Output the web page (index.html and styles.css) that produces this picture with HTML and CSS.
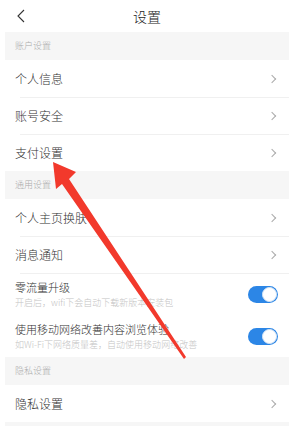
FILE: index.html
```html
<!DOCTYPE html>
<html lang="zh-CN">
<head>
  <meta charset="UTF-8" />
  <title>设置</title>
  <meta name="viewport" content="width=device-width, initial-scale=1.0" />
  <link rel="stylesheet" href="styles.css">
</head>
<body>
  <div class="page">
    <div class="header">
      <svg class="back" width="10" height="14" viewBox="0 0 10 14"><path d="M8 1 L2 7 L8 13" fill="none" stroke="#333" stroke-width="1.1"/></svg>
      <div class="title">设置</div>
    </div>

    <div class="group-label">账户设置</div>
    <div class="row"><span>个人信息</span><i class="chev"></i></div>
    <div class="row line"><span>账号安全</span><i class="chev"></i></div>
    <div class="row line"><span>支付设置</span><i class="chev"></i></div>

    <div class="group-label">通用设置</div>
    <div class="row"><span>个人主页换肤</span><i class="chev"></i></div>
    <div class="row line"><span>消息通知</span><i class="chev"></i></div>
    <div class="row switch-row line">
      <div class="texts">
        <div class="main">零流量升级</div>
        <div class="sub">开启后，wifi下会自动下载新版本安装包</div>
      </div>
      <div class="switch on"></div>
    </div>
    <div class="row switch-row">
      <div class="texts">
        <div class="main">使用移动网络改善内容浏览体验</div>
        <div class="sub">如Wi-Fi下网络质量差，自动使用移动网络改善</div>
      </div>
      <div class="switch on"></div>
    </div>

    <div class="group-label">隐私设置</div>
    <div class="row"><span>隐私设置</span><i class="chev"></i></div>
    <div class="group-end"></div>
  </div>

  <svg class="arrow" width="290" height="426" viewBox="0 0 290 426">
    <polygon fill="#f2392c" points="53,162 76,172 69,179 186,357 184,359 62,184 56,189"/>
  </svg>
</body>
</html>
```

FILE: styles.css
```css
body {
  margin: 0;
  background: #fff;
  font-family: "Noto Sans CJK SC", "Noto Sans", sans-serif;
  font-weight: 300;
  color: #333;
}
.page {
  padding-left: 5px;
  padding-right: 1px;
}
.header {
  height: 32px;
  display: flex;
  align-items: center;
  justify-content: center;
  position: relative;
}
.back {
  position: absolute;
  left: 11px;
  top: 9px;
}
.title {
  font-size: 14px;
  color: #222;
}
.group-label {
  background: #f6f6f6;
  height: 28px;
  line-height: 28px;
  padding-left: 10px;
  font-size: 9px;
  color: #aaa;
}
.row {
  height: 37px;
  display: flex;
  align-items: center;
  justify-content: space-between;
  padding: 0 10px;
  font-size: 12px;
  position: relative;
}
.row.line::before {
  content: "";
  position: absolute;
  left: 15px;
  right: 0;
  top: 0;
  height: 1px;
  background: #f0f0f0;
}
.chev {
  width: 5px;
  height: 5px;
  border-top: 1px solid #aaa;
  border-right: 1px solid #aaa;
  transform: rotate(45deg);
  margin-right: 4px;
}
.switch-row {
  height: 42px;
  padding-right: 11px;
}
.main {
  font-size: 11px;
  line-height: 15px;
}
.sub {
  font-size: 9px;
  line-height: 13px;
  color: #c4c4c4;
  margin-top: 1px;
}
.switch {
  width: 30px;
  height: 17px;
  border-radius: 9px;
  background: #2c86e6;
  position: relative;
}
.switch::after {
  content: "";
  position: absolute;
  right: 1px;
  top: 1px;
  width: 15px;
  height: 15px;
  box-sizing: border-box;
  border-radius: 50%;
  background: #fff;
  border: 1px solid #d8e6f5;
}
.group-end {
  background: #f6f6f6;
  height: 6px;
}
.arrow {
  position: absolute;
  left: 0;
  top: 0;
}
```
